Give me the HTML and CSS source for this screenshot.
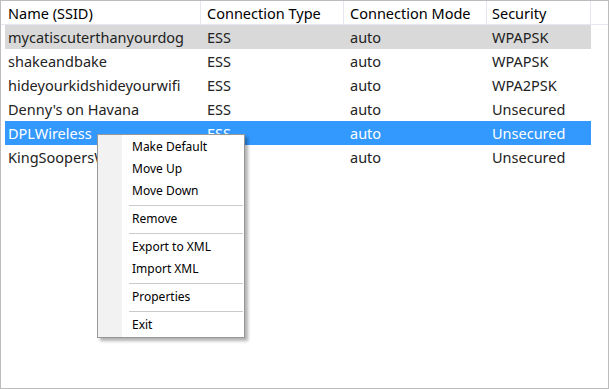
FILE: index.html
```html
<!DOCTYPE html>
<html lang="en">
<head>
  <meta charset="UTF-8" />
  <title>Wireless Profiles</title>
  <link rel="stylesheet" href="styles.css">
</head>
<body>
  <div class="list">
    <div class="list-header">
      <div class="hcell c1">Name (SSID)</div>
      <div class="hcell c2">Connection Type</div>
      <div class="hcell c3">Connection Mode</div>
      <div class="hcell c4">Security</div>
    </div>
    <div class="rows">
      <div class="row hover">
        <div class="cell c1">mycatiscuterthanyourdog</div>
        <div class="cell c2">ESS</div>
        <div class="cell c3">auto</div>
        <div class="cell c4">WPAPSK</div>
      </div>
      <div class="row">
        <div class="cell c1">shakeandbake</div>
        <div class="cell c2">ESS</div>
        <div class="cell c3">auto</div>
        <div class="cell c4">WPAPSK</div>
      </div>
      <div class="row">
        <div class="cell c1">hideyourkidshideyourwifi</div>
        <div class="cell c2">ESS</div>
        <div class="cell c3">auto</div>
        <div class="cell c4">WPA2PSK</div>
      </div>
      <div class="row">
        <div class="cell c1">Denny's on Havana</div>
        <div class="cell c2">ESS</div>
        <div class="cell c3">auto</div>
        <div class="cell c4">Unsecured</div>
      </div>
      <div class="row selected">
        <div class="cell c1">DPLWireless</div>
        <div class="cell c2">ESS</div>
        <div class="cell c3">auto</div>
        <div class="cell c4">Unsecured</div>
      </div>
      <div class="row">
        <div class="cell c1">KingSoopersWiFi</div>
        <div class="cell c2">ESS</div>
        <div class="cell c3">auto</div>
        <div class="cell c4">Unsecured</div>
      </div>
    </div>

    <ul class="menu">
      <li class="item">Make Default</li>
      <li class="item">Move Up</li>
      <li class="item">Move Down</li>
      <li class="sep"></li>
      <li class="item">Remove</li>
      <li class="sep"></li>
      <li class="item">Export to XML</li>
      <li class="item">Import XML</li>
      <li class="sep"></li>
      <li class="item">Properties</li>
      <li class="sep"></li>
      <li class="item">Exit</li>
    </ul>
  </div>
</body>
</html>
```

FILE: styles.css
```css
body {
  margin: 0;
  background-color: #fff;
  font-family: "Noto Sans", "Open Sans", sans-serif;
}

.list {
  position: relative;
  width: 609px;
  height: 389px;
  box-sizing: border-box;
  border: 1px solid #bcbcbc;
  background-color: #fff;
  overflow: hidden;
}

.list-header {
  display: flex;
  height: 23px;
  border-bottom: 1px solid #e5e9ef;
  font-size: 14.5px;
  color: #000;
}
.hcell {
  box-sizing: border-box;
  height: 23px;
  line-height: 24px;
  border-right: 1px solid #e5e9ef;
  white-space: nowrap;
  overflow: hidden;
}
.hcell.c1 { width: 200px; padding-left: 7px; }
.hcell.c2 { width: 143px; padding-left: 6px; }
.hcell.c3 { width: 143px; padding-left: 6px; }
.hcell.c4 { width: 104px; padding-left: 5px; }

.rows {
  display: flex;
  flex-direction: column;
  padding-left: 4px;
}
.row {
  display: flex;
  height: 24px;
  width: 586px;
  font-size: 14.5px;
  color: #222;
}
.row.hover { background-color: #d9d9d9; }
.row.selected { background-color: #3399ff; color: #fff; }
.cell {
  box-sizing: border-box;
  line-height: 24px;
  white-space: nowrap;
  overflow: hidden;
}
.cell.c1 { width: 196px; padding-left: 3px; }
.cell.c2 { width: 143px; padding-left: 6px; }
.cell.c3 { width: 143px; padding-left: 6px; }
.cell.c4 { width: 104px; padding-left: 5px; }

.menu {
  position: absolute;
  left: 96px;
  top: 133px;
  width: 148px;
  margin: 0;
  padding: 1px 0;
  list-style: none;
  box-sizing: border-box;
  border: 1px solid #979797;
  background: linear-gradient(to right, #f2f2f2 24px, #fff 24px);
  box-shadow: 3px 3px 3px rgba(0, 0, 0, 0.3);
  font-size: 12px;
  color: #000;
}
.menu .item {
  height: 22px;
  line-height: 22px;
  padding-left: 34px;
  white-space: nowrap;
}
.menu .sep {
  height: 6px;
  display: flex;
  align-items: center;
  padding-left: 31px;
  padding-right: 1px;
}
.menu .sep::after {
  content: "";
  flex: 1;
  height: 1px;
  background-color: #cacaca;
}
```
